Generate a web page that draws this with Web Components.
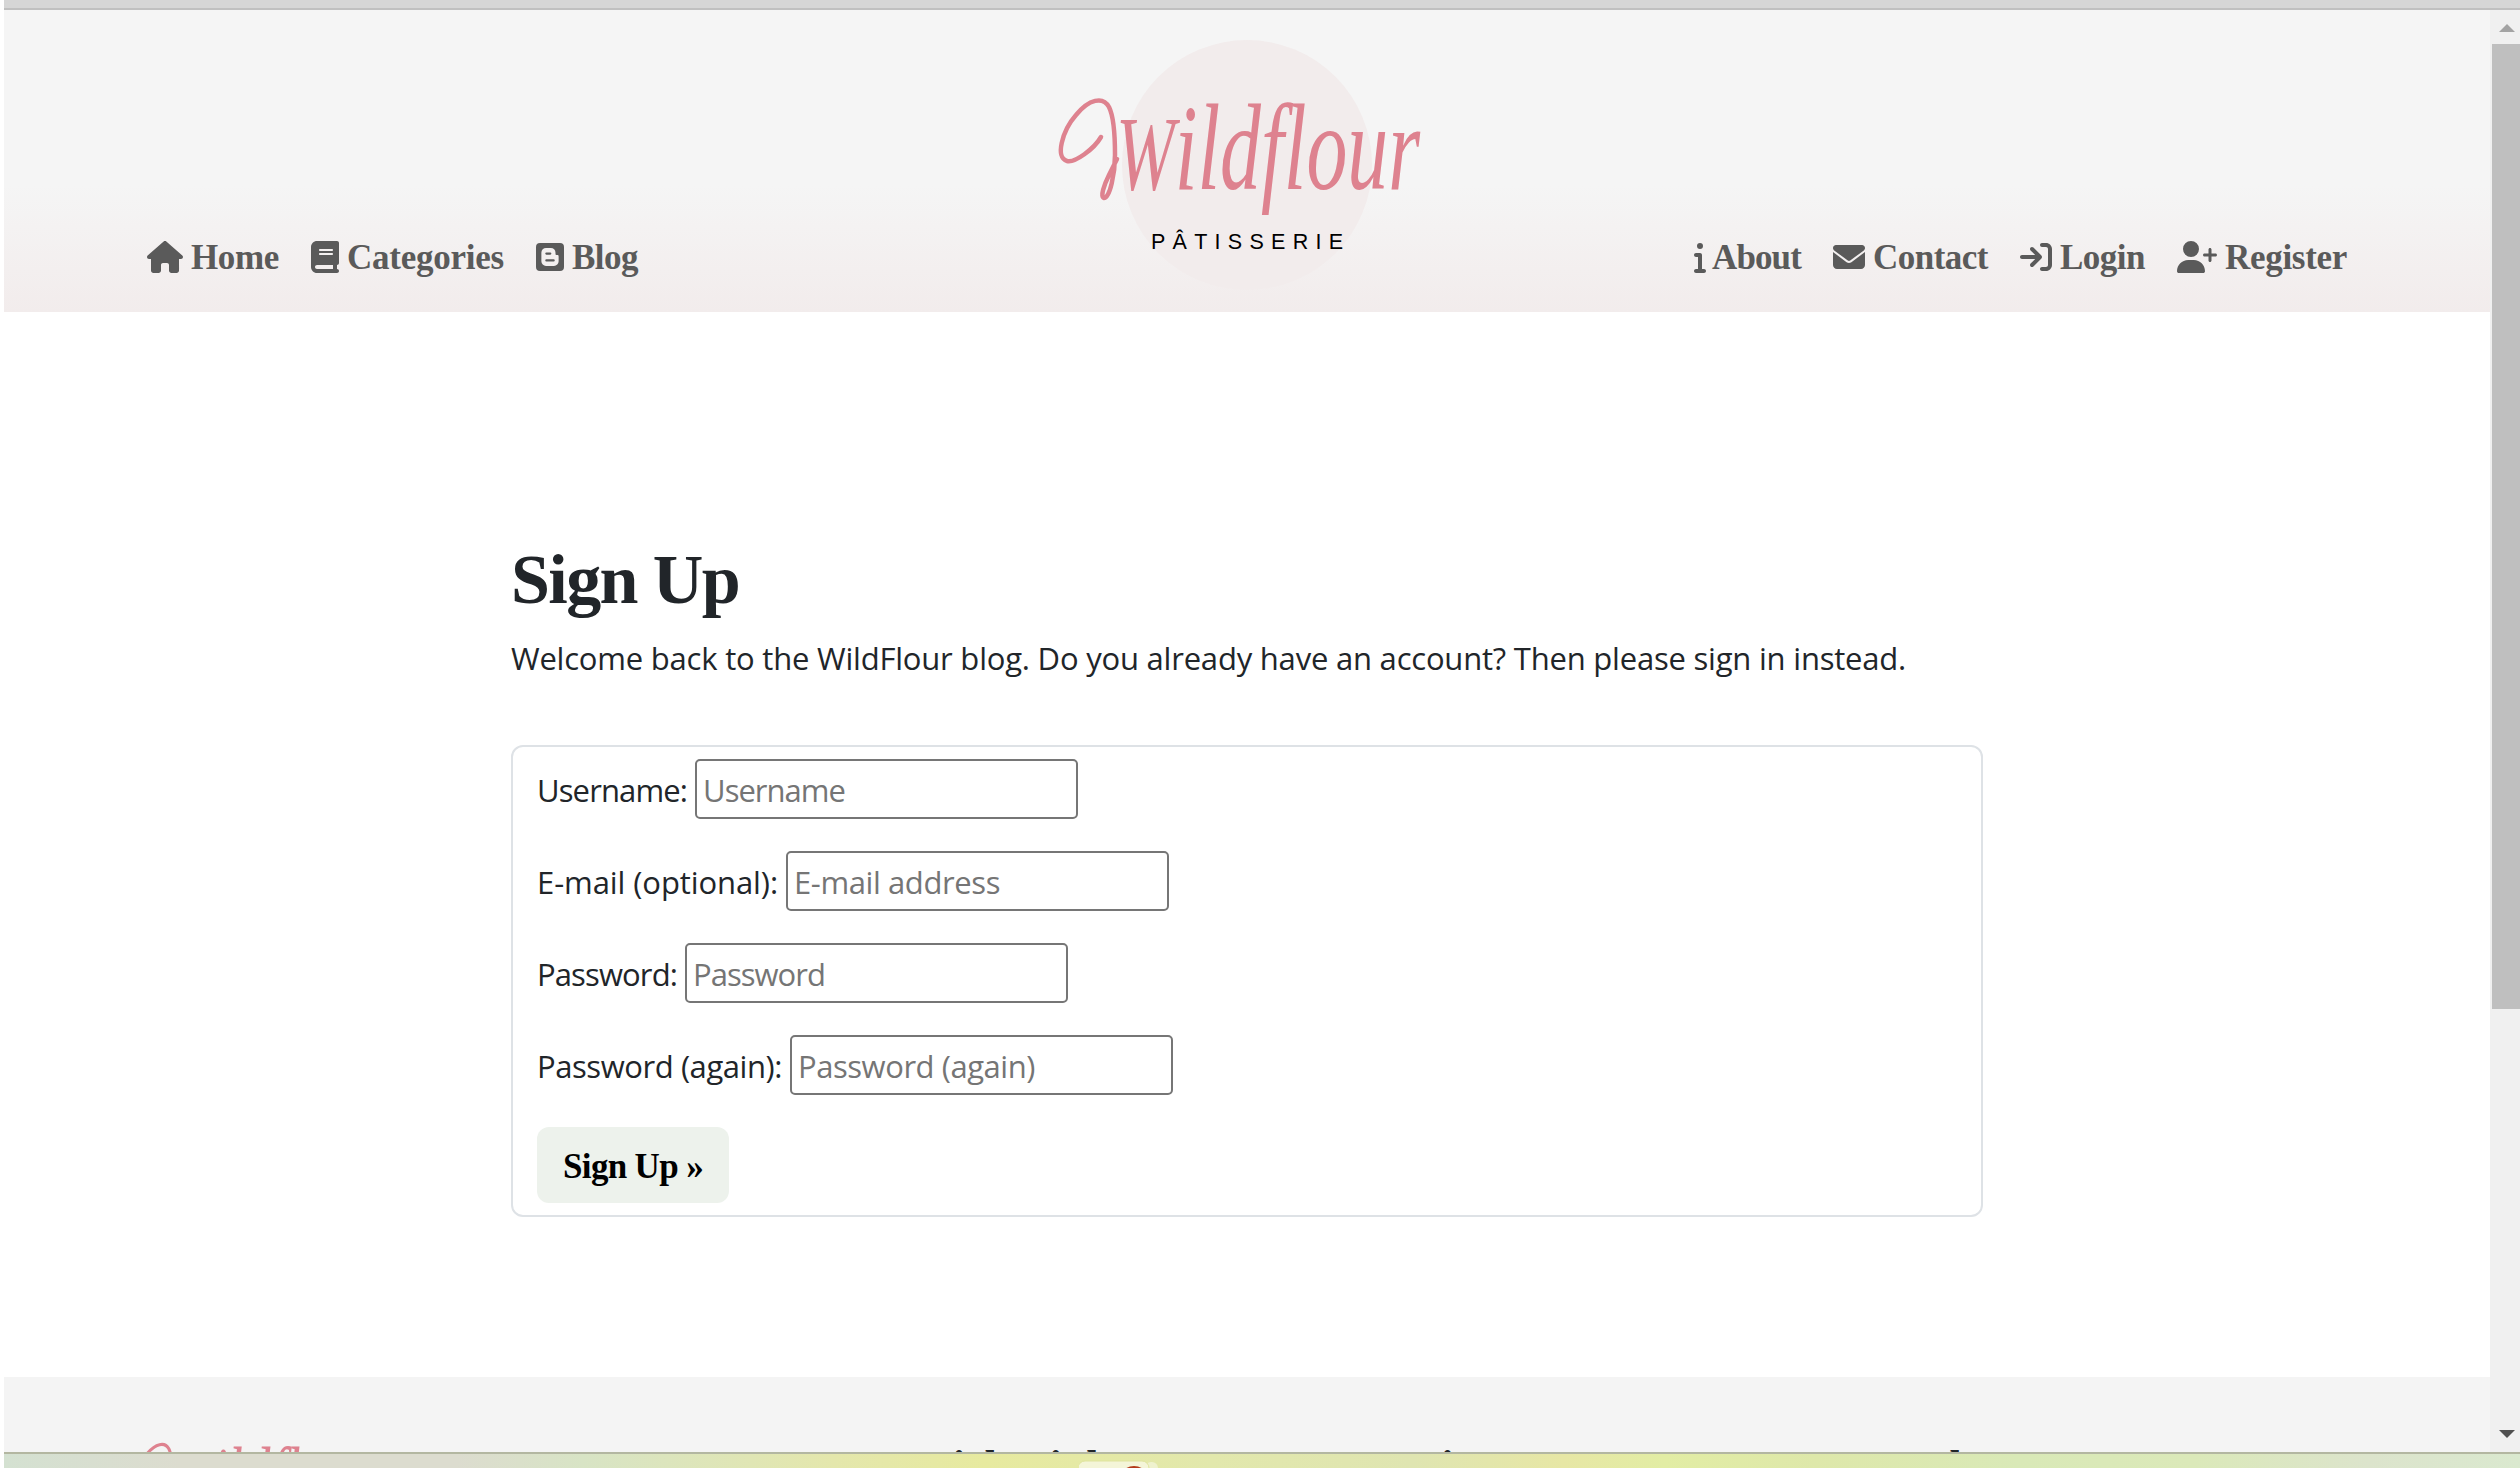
<!DOCTYPE html>
<html lang="en">
<head>
<meta charset="utf-8">
<title>Wildflour - Sign Up</title>
<style>
html,body{margin:0;height:100%;background:#fff;overflow:hidden}
body{font-family:"Open Sans","Noto Sans",sans-serif;color:#212529}
</style>
</head>
<body>
<wf-window></wf-window>
<script>
const define = (name, html, setup) => customElements.define(name, class extends HTMLElement {
  constructor() { super(); this.attachShadow({mode: 'open'}); }
  connectedCallback() {
    this.shadowRoot.innerHTML = typeof html === 'function' ? html(this) : html;
    if (setup) setup(this, this.shadowRoot);
  }
});

const ICONS = {
  house: [576, '<path d="M575.8 255.5c0 18-15 32.1-32 32.1h-32l.7 160.2c0 2.700-.2 5.400-.5 8.100V472c0 22.100-17.900 40-40 40H456c-1.100 0-2.200 0-3.300-.1c-1.400 .1-2.800 .1-4.200 .1H416 392c-22.100 0-40-17.900-40-40V448 384c0-17.700-14.300-32-32-32H256c-17.700 0-32 14.300-32 32v64 24c0 22.100-17.900 40-40 40H160 128.100c-1.500 0-3-.1-4.500-.2c-1.200 .1-2.400 .2-3.600 .2H104c-22.100 0-40-17.900-40-40V360c0-.9 0-1.900 .1-2.800V287.600H32c-18 0-32-14-32-32.100c0-9 3-17 10-24L266.400 8c7-7 15-8 22-8s15 2 21 7L564.800 231.500c8 7 12 15 11 24z"/>'],
  book: [448, '<path d="M96 0C43 0 0 43 0 96V416c0 53 43 96 96 96H384h32c17.700 0 32-14.300 32-32s-14.300-32-32-32V384c17.700 0 32-14.300 32-32V32c0-17.700-14.300-32-32-32H384 96zm0 384H352v64H96c-17.700 0-32-14.300-32-32s14.300-32 32-32zm32-240c0-8.800 7.200-16 16-16H336c8.800 0 16 7.200 16 16s-7.200 16-16 16H144c-8.800 0-16-7.200-16-16zm16 48H336c8.800 0 16 7.200 16 16s-7.200 16-16 16H144c-8.800 0-16-7.200-16-16s7.200-16 16-16z"/>'],
  blog: [448, '<path fill-rule="evenodd" d="M64 32H384a64 64 0 0 1 64 64V416a64 64 0 0 1-64 64H64a64 64 0 0 1-64-64V96A64 64 0 0 1 64 32zM160 112a74 74 0 0 0-74 74V324a74 74 0 0 0 74 74H288a74 74 0 0 0 74-74V246c0-18-7-24-24-24h-12c-10 0-14-5-14-16v-20a74 74 0 0 0-74-74zM166 182h62a18 18 0 0 1 0 36h-62a18 18 0 0 1 0-36zm0 110h116a18 18 0 0 1 0 36H166a18 18 0 0 1 0-36z"/>'],
  info: [192, '<path d="M48 80a48 48 0 1 1 96 0A48 48 0 1 1 48 80zM0 224c0-17.700 14.300-32 32-32H96c17.700 0 32 14.300 32 32V448h32c17.700 0 32 14.300 32 32s-14.300 32-32 32H32c-17.700 0-32-14.300-32-32s14.300-32 32-32H64V256H32c-17.700 0-32-14.300-32-32z"/>'],
  mail: [512, '<path d="M48 64C21.500 64 0 85.500 0 112c0 15.100 7.100 29.300 19.200 38.400L236.800 313.600c11.400 8.500 27 8.500 38.400 0L492.800 150.400c12.100-9.100 19.200-23.300 19.200-38.400c0-26.500-21.500-48-48-48H48zM0 176V384c0 35.300 28.700 64 64 64H448c35.300 0 64-28.700 64-64V176L294.400 339.200c-22.800 17.100-54 17.100-76.800 0L0 176z"/>'],
  login: [512, '<path d="M352 96l64 0c17.700 0 32 14.300 32 32l0 256c0 17.700-14.300 32-32 32l-64 0c-17.700 0-32 14.300-32 32s14.300 32 32 32l64 0c53 0 96-43 96-96l0-256c0-53-43-96-96-96l-64 0c-17.700 0-32 14.300-32 32s14.300 32 32 32zm-9.400 182.600c12.500-12.500 12.500-32.800 0-45.300l-128-128c-12.500-12.500-32.800-12.500-45.300 0s-12.500 32.800 0 45.300L242.700 224 32 224c-17.700 0-32 14.300-32 32s14.300 32 32 32l210.700 0-73.400 73.400c-12.500 12.500-12.500 32.800 0 45.300s32.800 12.500 45.300 0l128-128z"/>'],
  user: [640, '<path d="M96 128a128 128 0 1 1 256 0A128 128 0 1 1 96 128zM0 482.300C0 383.800 79.800 304 178.300 304h91.400C368.200 304 448 383.800 448 482.300c0 16.400-13.300 29.700-29.700 29.700H29.700C13.300 512 0 498.700 0 482.300zM504 312V248H440c-13.300 0-24-10.700-24-24s10.700-24 24-24h64V136c0-13.300 10.700-24 24-24s24 10.700 24 24v64h64c13.300 0 24 10.700 24 24s-10.700 24-24 24H552v64c0 13.300-10.700 24-24 24s-24-10.700-24-24z"/>']
};

/* Line of text spaced out to an exact advance width */
define('fit-text', '<style>:host{display:block;flex:none;white-space:nowrap}span{display:inline-block}</style><span><slot></slot></span>',
  (el, root) => {
    const w = +el.getAttribute('width'), span = root.querySelector('span');
    span.style.letterSpacing = (w - span.getBoundingClientRect().width) / el.textContent.length + 'px';
    el.style.width = w + 'px';
  });

define('nav-link', el => {
  const [w, p] = ICONS[el.getAttribute('icon')];
  return `<style>:host{display:block}
  a{display:flex;align-items:center;height:40px;color:#5a5a5a;text-decoration:none;font:bold 35px/40px "Liberation Serif",serif}
  fit-text{padding-top:2px}
  svg{flex:none;display:block;fill:currentColor;margin-right:${el.getAttribute('gap') || 8}px}</style>
  <a><svg width="${w / 16}" height="32" viewBox="0 0 ${w} 512">${p}</svg><fit-text width="${el.getAttribute('width')}">${el.textContent}</fit-text></a>`;
});

define('brand-logo', `<style>:host{display:block}svg{display:block;width:100%;height:100%;overflow:visible}</style>
<svg viewBox="0 0 400 250">
  <circle cx="200" cy="125" r="125" fill="#f2ecec" class="disc"/>
  <path d="M54 97C47 109 28 123 20 121C8 118 15 91 29 75C42 59 56 56 62 67C67 77 68 100 68 115C68 133 63 158 57 158C53 157 57 145 62 135L70 119" fill="none" stroke="#de828f" stroke-width="4.500" stroke-linecap="round"/>
  <text x="69" y="149" textLength="304" lengthAdjust="spacingAndGlyphs" font-family="Liberation Serif,serif" font-style="italic" font-size="123" fill="#de828f"><tspan font-size="106">W</tspan>ildflour</text>
  <text class="sub" x="104" y="209" textLength="192" font-family="Liberation Sans,sans-serif" font-size="21.500" fill="#000">PÂTISSERIE</text>
</svg>`, (el, root) => {
  if (el.hasAttribute('plain')) root.querySelectorAll('.disc,.sub').forEach(n => n.remove());
});

define('site-header', `<style>
:host{display:grid;grid-template-columns:1fr 400px 1fr;box-sizing:border-box;height:302px;padding:30px 143px 0;background:linear-gradient(#f5f5f5 58%,#f2ecec)}
nav{display:flex;align-items:flex-end;gap:32px;padding-bottom:35px}
nav.r{justify-content:flex-end}
brand-logo{height:250px}</style>
<nav><nav-link icon="house" width="88">Home</nav-link><nav-link icon="book" width="157">Categories</nav-link><nav-link icon="blog" width="66">Blog</nav-link></nav>
<brand-logo></brand-logo>
<nav class="r"><nav-link icon="info" gap="6" width="89">About</nav-link><nav-link icon="mail" width="115">Contact</nav-link><nav-link icon="login" width="85">Login</nav-link><nav-link icon="user" width="122">Register</nav-link></nav>`);

define('form-field', el => `<style>
:host{display:flex;align-items:center;height:60px;gap:8px}
label{font-size:31px;line-height:48px;padding-top:2px}
input{box-sizing:border-box;width:383px;height:60px;margin:0;padding:1px 4px 0 6px;border:2px solid #767676;border-radius:5px;background:#fff;font:31px/48px "Open Sans",sans-serif;outline:0}
input::placeholder{color:#757575;opacity:1}</style>
<label><fit-text width="${el.getAttribute('label-width')}">${el.getAttribute('label')}</fit-text></label>
<input type="text" placeholder="${el.getAttribute('hint')}">`, (el, root) => {
  const c = document.createElement('canvas').getContext('2d'), t = el.getAttribute('hint');
  c.font = '31px "Open Sans"';
  root.querySelector('input').style.letterSpacing = (+el.getAttribute('hint-width') - c.measureText(t).width) / t.length + 'px';
});

define('signup-form', `<style>
:host{display:block;width:1472px;margin-left:507px;padding-top:230px}
h1{margin:0;font:bold 70px/76px "Liberation Serif",serif}
p{margin:16px 0 63px;font-size:31px;line-height:48px}
form{box-sizing:border-box;height:472px;border:2px solid #dee2e6;border-radius:12px;background:#fff;padding:12px 24px;display:flex;flex-direction:column;align-items:flex-start;gap:32px}
button{height:76px;width:192px;border:0;border-radius:12px;background:#edf2ec;color:#000;padding:3px 0 0 26px;font:bold 35px/40px "Liberation Serif",serif;text-align:left}</style>
<h1><fit-text width="228">Sign Up</fit-text></h1>
<p><fit-text width="1395">Welcome back to the WildFlour blog. Do you already have an account? Then please sign in instead.</fit-text></p>
<form>
<form-field label="Username:" label-width="150" hint="Username" hint-width="142"></form-field>
<form-field label="E-mail (optional):" label-width="241" hint="E-mail address" hint-width="206"></form-field>
<form-field label="Password:" label-width="140" hint="Password" hint-width="132"></form-field>
<form-field label="Password (again):" label-width="245" hint="Password (again)" hint-width="237"></form-field>
<button type="button"><fit-text width="140">Sign Up »</fit-text></button>
</form>`);

define('site-footer', `<style>
:host{display:flex;height:75px;background:#f4f4f4;overflow:hidden}
brand-logo{flex:none;width:268px;height:167px;margin:27px 0 0 123px}
h2{margin:66px 0 0;font:bold 44px/48px "Liberation Serif",serif}
.q{margin-left:499px;width:382px}.c{width:555px}</style>
<brand-logo plain></brand-logo>
<h2 class="q"><fit-text width="234">Quick Links</fit-text></h2>
<h2 class="c"><fit-text width="220">Categories</fit-text></h2>
<h2><fit-text width="246">Newsletter</fit-text></h2>`);

define('scroll-bar', `<style>
:host{display:flex;flex-direction:column;align-items:flex-end;width:30px;background:#f0f0f0}
svg{width:28px;height:34px;flex:none}
.thumb{width:28px;height:965px;background:#bfbfbf}.gap{flex:1}</style>
<svg viewBox="0 0 28 34"><path d="M7 22L15 14L23 22z" fill="#a3a3a3"/></svg>
<div class="thumb"></div><div class="gap"></div>
<svg viewBox="0 0 28 34"><path d="M7 12H23L15 20z" fill="#505050"/></svg>`);

define('task-strip', `<style>
:host{display:block;height:14px;border-top:2px solid #b3b7a1;overflow:hidden;background:linear-gradient(90deg,#d4e1d1,#dcdccf 7%,#dcdccf 18%,#d8e4c5 23%,#e4e7ac 33%,#e7ea9f 39%,#e2e8ac 48%,#dfe5b1 56%,#e7e7a5 62%,#e2eda4 66%,#dee8aa 72%,#d9e9b7 80%,#dbe9b9 87%,#dce4cc 94%,#dae9cf)}
svg{display:block;margin-left:1075px}</style>
<svg width="82" height="14"><rect x="66" y="8" width="13" height="20" rx="6" fill="#eff2ce"/><rect x="-1" y="7" width="71" height="20" rx="7" fill="#f4f5d8" stroke="#dfe49d"/><circle cx="55" cy="27" r="15" fill="#b33a19"/></svg>`);

define('wf-window', `<style>
:host{display:flex;flex-direction:column;box-sizing:border-box;width:2520px;height:1468px;padding-left:4px}
.top{height:8px;background:#d6d6d6;border-bottom:2px solid #c0c0c0;flex:none}
.view{display:flex;height:1442px}
.page{width:2486px;display:flex;flex-direction:column}
main{flex:1;background:#fff}</style>
<div class="top"></div>
<div class="view"><div class="page"><site-header></site-header><main><signup-form></signup-form></main><site-footer></site-footer></div><scroll-bar></scroll-bar></div>
<task-strip></task-strip>`);
</script>
</body>
</html>
